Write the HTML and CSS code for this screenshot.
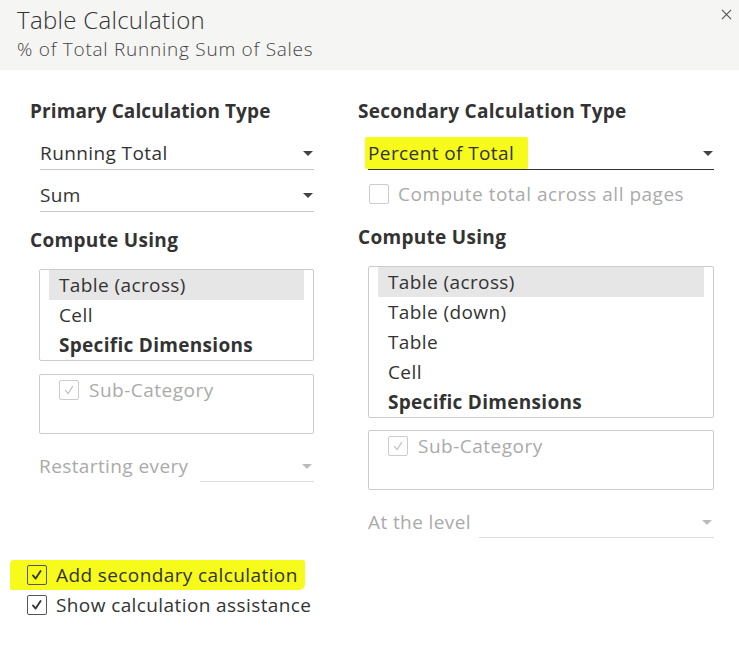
FILE: index.html
```html
<!DOCTYPE html>
<html>
<head>
<meta charset="utf-8">
<link rel="stylesheet" href="styles.css">
</head>
<body>
<div class="dialog">
  <header class="header">
    <div class="title">Table Calculation</div>
    <div class="subtitle">% of Total Running Sum of Sales</div>
    <svg class="close" viewBox="0 0 12 12"><path d="M1 1 L11 11 M11 1 L1 11" /></svg>
  </header>
  <div class="columns">
    <section class="col col-left">
      <h2 class="heading h-primary">Primary Calculation Type</h2>
      <div class="select sel-1"><span>Running Total</span><i class="arrow"></i></div>
      <div class="select sel-2"><span>Sum</span><i class="arrow"></i></div>
      <h2 class="heading h-compute-l">Compute Using</h2>
      <ul class="listbox">
        <li class="selected">Table (across)</li>
        <li>Cell</li>
        <li class="bold">Specific Dimensions</li>
      </ul>
      <div class="dimbox">
        <label class="check disabled"><span class="box"><svg viewBox="0 0 20 20"><path d="M6 10.5 L9 14 L14 6" /></svg></span>Sub-Category</label>
      </div>
      <div class="levelrow restart">
        <span class="lbl">Restarting every</span>
        <div class="minisel"><i class="arrow light"></i></div>
      </div>
    </section>
    <section class="col col-right">
      <h2 class="heading">Secondary Calculation Type</h2>
      <div class="select sel-dark"><span class="hl">Percent of Total</span><i class="arrow"></i></div>
      <label class="check disabled pages"><span class="box empty"></span>Compute total across all pages</label>
      <h2 class="heading h-compute-r">Compute Using</h2>
      <ul class="listbox">
        <li class="selected">Table (across)</li>
        <li>Table (down)</li>
        <li>Table</li>
        <li>Cell</li>
        <li class="bold">Specific Dimensions</li>
      </ul>
      <div class="dimbox">
        <label class="check disabled"><span class="box"><svg viewBox="0 0 20 20"><path d="M6 10.5 L9 14 L14 6" /></svg></span>Sub-Category</label>
      </div>
      <div class="levelrow level">
        <span class="lbl">At the level</span>
        <div class="minisel"><i class="arrow light"></i></div>
      </div>
    </section>
  </div>
  <div class="footer">
    <label class="check big hl-row"><span class="box"><svg viewBox="0 0 20 20"><path d="M5.5 10.5 L8.5 14 L14 5.5" /></svg></span>Add secondary calculation</label>
    <label class="check big"><span class="box"><svg viewBox="0 0 20 20"><path d="M5.5 10.5 L8.5 14 L14 5.5" /></svg></span>Show calculation assistance</label>
  </div>
</div>
</body>
</html>
```

FILE: styles.css
```css
* { box-sizing: border-box; }
html, body { margin: 0; padding: 0; background: #fff; }
body {
  font-family: "Open Sans", "Noto Sans", "Liberation Sans", sans-serif;
  color: #333;
  width: 739px;
  height: 646px;
  overflow: hidden;
  letter-spacing: 0.4px;
}
.dialog { position: relative; }

.header {
  position: relative;
  height: 70px;
  background: #f5f5f3;
  padding: 5px 0 0 17px;
}
.title {
  font-size: 24px;
  font-weight: 300;
  line-height: 30px;
  letter-spacing: 0.3px;
  color: #333;
}
.subtitle {
  font-size: 19px;
  font-weight: 300;
  line-height: 28px;
  letter-spacing: 0.75px;
  color: #444;
}
.close {
  position: absolute;
  right: 7px;
  top: 9px;
  width: 11px;
  height: 11px;
}
.close path { stroke: #555; stroke-width: 1.3; fill: none; }

.columns {
  display: grid;
  grid-template-columns: 284px 356px;
  column-gap: 44px;
  padding: 28px 0 0 30px;
}

.heading {
  margin: 0;
  font-size: 19px;
  font-weight: 700;
  line-height: 26px;
  letter-spacing: 0.3px;
  color: #333;
}
.h-primary { letter-spacing: 0.1px; }

.select {
  position: relative;
  margin-left: 10px;
  height: 33px;
  border-bottom: 1px solid #c8c8c8;
  font-size: 19px;
  line-height: 32px;
  display: flex;
  align-items: center;
  justify-content: space-between;
  padding-right: 1px;
}
.sel-1 { margin-top: 13px; }
.sel-2 { margin-top: 9px; }
.sel-dark { margin-top: 13px; border-bottom-color: #333; }
.sel-dark span { margin-left: -3px; padding: 0 14px 0 3px; }

.hl {
  background: #f6fb1c;
  border-radius: 2px;
}

.arrow {
  display: inline-block;
  width: 0;
  height: 0;
  border-left: 5px solid transparent;
  border-right: 5px solid transparent;
  border-top: 5px solid #444;
}
.arrow.light { border-top-color: #bbb; }

.h-compute-l { margin-top: 15px; }

.listbox {
  list-style: none;
  margin: 16px 0 0 9px;
  padding: 0 9px;
  border: 1px solid #ccc;
  border-radius: 2px;
  font-size: 19px;
}
.col-right .listbox, .col-right .dimbox { margin-left: 10px; }
.listbox li {
  height: 30px;
  line-height: 30px;
  padding-left: 10px;
}
.listbox li.selected { background: #e6e6e6; }
.listbox li.bold { font-weight: 700; letter-spacing: 0.3px; }

.dimbox {
  margin: 13px 0 0 9px;
  height: 60px;
  border: 1px solid #ccc;
  border-radius: 2px;
  padding: 5px 0 0 19px;
}
.col-right .dimbox { margin-top: 12px; }

.check {
  display: flex;
  align-items: center;
  font-size: 19px;
  line-height: 20px;
  white-space: nowrap;
}
.check .box {
  width: 20px;
  height: 20px;
  border: 1px solid #555;
  border-radius: 2px;
  margin-right: 10px;
  display: inline-flex;
  flex: none;
}
.check .box svg { width: 18px; height: 18px; }
.check .box path { fill: none; stroke: #333; stroke-width: 2; stroke-linecap: round; stroke-linejoin: round; }
.check.disabled { color: #aaa; letter-spacing: 0.5px; }
.check.disabled .box { border-color: #ccc; }
.check.disabled .box path { stroke: #c4c4c4; stroke-width: 1.4; }

.pages { margin: 14px 0 0 11px; letter-spacing: 0.38px; }
.pages .box { margin-right: 9px; }

.h-compute-r { margin-top: 20px; }

.levelrow {
  display: flex;
  align-items: flex-end;
  justify-content: space-between;
  margin-left: 9px;
  height: 34px;
}
.levelrow .lbl {
  font-size: 19px;
  color: #aaa;
  line-height: 26px;
  padding-bottom: 3px;
}
.minisel {
  height: 30px;
  border-bottom: 1px solid #ddd;
  display: flex;
  align-items: center;
  justify-content: flex-end;
  padding-right: 2px;
}
.restart { margin-top: 14px; }
.restart .minisel { width: 114px; }
.level { margin-top: 14px; margin-left: 10px; }
.level .minisel { width: 235px; }

.footer {
  position: relative;
  z-index: 0;
  padding: 0 0 0 27px;
  margin-top: 22px;
}
.check.big { height: 30px; }
.check.big .box { margin-right: 9px; }
.hl-row { position: relative; }
.hl-row::before {
  content: "";
  position: absolute;
  left: -17px;
  top: 0;
  width: 295px;
  height: 30px;
  background: #f6fb1c;
  border-radius: 4px 2px 6px 2px;
  z-index: -1;
}
```
